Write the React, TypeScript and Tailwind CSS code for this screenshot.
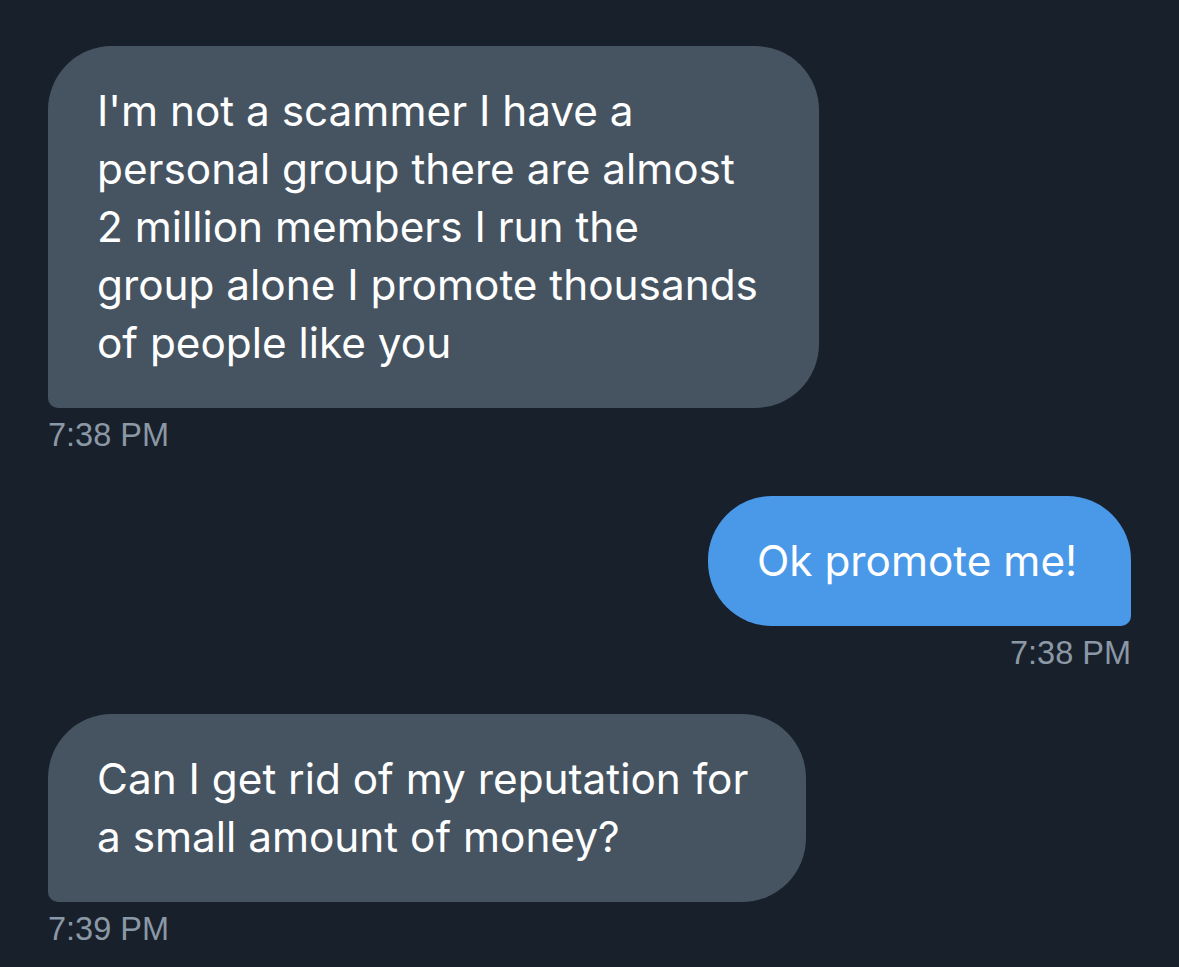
import React from "react";

const textFont = { fontFamily: "Inter, 'Noto Sans', sans-serif" };

function Received({ lines, width, time }: { lines: string[]; width: number; time: string }) {
  return (
    <div className="flex flex-col items-start">
      <div
        className="bg-[#465462] text-white rounded-[64px] rounded-bl-[10px] px-[49px] py-[36px] text-[42.3px] leading-[58px] whitespace-nowrap"
        style={{ ...textFont, width }}
      >
        {lines.map((l, i) => (
          <div key={i}>{l}</div>
        ))}
      </div>
      <div className="mt-[5px] h-[44px] leading-[44px] text-[32.5px] text-[#8b98a5] font-['Liberation_Sans',Arial,sans-serif]">
        {time}
      </div>
    </div>
  );
}

function Sent({ text, width, time }: { text: string; width: number; time: string }) {
  return (
    <div className="flex flex-col items-end">
      <div
        className="bg-[#4a99e9] text-white rounded-[64px] rounded-br-[10px] px-[49px] py-[36px] text-[42.3px] leading-[58px] whitespace-nowrap"
        style={{ ...textFont, width }}
      >
        {text}
      </div>
      <div className="mt-[5px] h-[44px] leading-[44px] text-[32.5px] text-[#8b98a5] font-['Liberation_Sans',Arial,sans-serif]">
        {time}
      </div>
    </div>
  );
}

export default function App() {
  return (
    <div className="w-[1179px] h-[967px] bg-[#18202b] px-[48px] pt-[46px] flex flex-col gap-[39px] overflow-hidden">
      <Received
        width={771}
        time="7:38 PM"
        lines={[
          "I'm not a scammer I have a",
          "personal group there are almost",
          "2 million members I run the",
          "group alone I promote thousands",
          "of people like you",
        ]}
      />
      <Sent width={423} text="Ok promote me!" time="7:38 PM" />
      <Received
        width={758}
        time="7:39 PM"
        lines={["Can I get rid of my reputation for", "a small amount of money?"]}
      />
    </div>
  );
}
